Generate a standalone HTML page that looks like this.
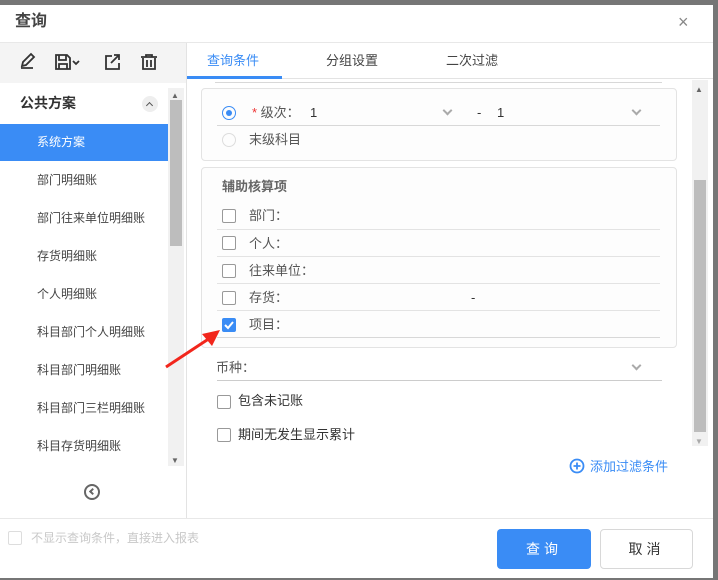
<!DOCTYPE html>
<html><head><meta charset="utf-8"><style>
*{margin:0;padding:0;box-sizing:border-box}
body{width:718px;height:580px;background:#767676;font-family:"Liberation Sans","Noto Sans CJK SC",sans-serif;font-size:13px;color:#444;position:relative;overflow:hidden}
.a{position:absolute}
.dlg{left:0;top:5px;width:713px;height:573px;background:#fff}
.t{position:absolute;white-space:nowrap;line-height:16px}
.ln{position:absolute;height:1px;background:#e3e3e3}
.cb{position:absolute;width:14px;height:14px;border:1px solid #999;border-radius:2px;background:#fff}
.chev{position:absolute;width:7px;height:7px;border-right:2px solid #aaa;border-bottom:2px solid #aaa;transform:rotate(45deg)}
</style></head><body>
<div class="a dlg"></div>
<div class="t" style="left:15px;top:14px;font-size:16px;font-weight:bold;color:#444">查询</div>
<div class="t" style="left:678px;top:14px;font-size:18px;color:#888">×</div>
<div class="ln" style="left:0;top:42px;width:713px;background:#e8e8e8"></div>
<!-- left toolbar -->
<div class="a" style="left:0;top:43px;width:186px;height:40px;background:#f4f4f4"></div>
<svg class="a" style="left:0;top:43px" width="186" height="40" fill="none" stroke="#333" stroke-width="1.8">
<path d="M21 25h12M22 23l1-4 8-8 3 3-8 8z"/>
<path d="M56 12h11l3 3v11H56z M59 12v5h7v-5 M59 26v-5h8v5"/>
<path d="M73 18l3 3 3-3"/>
<path d="M112 13h-6v13h13v-6 M111 20l8-8 M114 12h5v5"/>
<path d="M141 14h16 M146 14v-2h6v2 M143 15v11h12V15 M147 17v7 M151 17v7"/>
</svg>
<div class="ln" style="left:186px;top:43px;width:1px;height:475px"></div>
<!-- list -->
<div class="t" style="left:20px;top:95px;font-weight:bold;color:#333;font-size:14px">公共方案</div>
<div class="a" style="left:142px;top:96px;width:16px;height:16px;border-radius:50%;background:#eee"></div>
<div class="chev" style="left:147px;top:103px;transform:rotate(225deg);width:5px;height:5px;border-color:#555;border-width:1.5px"></div>
<div class="a" style="left:0;top:124px;width:168px;height:37px;background:#3a8cf5"></div>
<div class="t" style="left:37px;top:134px;color:#fff;font-size:12px">系统方案</div>
<div class="t" style="left:37px;top:172px;font-size:12px;color:#444">部门明细账</div>
<div class="t" style="left:37px;top:210px;font-size:12px;color:#444">部门往来单位明细账</div>
<div class="t" style="left:37px;top:248px;font-size:12px;color:#444">存货明细账</div>
<div class="t" style="left:37px;top:286px;font-size:12px;color:#444">个人明细账</div>
<div class="t" style="left:37px;top:324px;font-size:12px;color:#444">科目部门个人明细账</div>
<div class="t" style="left:37px;top:362px;font-size:12px;color:#444">科目部门明细账</div>
<div class="t" style="left:37px;top:400px;font-size:12px;color:#444">科目部门三栏明细账</div>
<div class="t" style="left:37px;top:438px;font-size:12px;color:#444">科目存货明细账</div>
<div class="a" style="left:168px;top:88px;width:16px;height:378px;background:#f1f1f1"></div>
<div class="a" style="left:170px;top:100px;width:12px;height:146px;background:#bdbdbd"></div>
<div class="t" style="left:171px;top:88px;font-size:8px;color:#666">▲</div>
<div class="t" style="left:171px;top:453px;font-size:8px;color:#666">▼</div>
<div class="a" style="left:84px;top:484px;width:16px;height:16px;border:2px solid #666;border-radius:50%"></div>
<div class="chev" style="left:90px;top:489px;width:5px;height:5px;border-color:#666;border-width:2px;transform:rotate(135deg)"></div>
<!-- tabs -->
<div class="t" style="left:207px;top:53px;color:#3a8cf5">查询条件</div>
<div class="t" style="left:326px;top:53px;color:#444">分组设置</div>
<div class="t" style="left:446px;top:53px;color:#444">二次过滤</div>
<div class="ln" style="left:187px;top:78px;width:526px"></div>
<div class="a" style="left:187px;top:76px;width:95px;height:3px;background:#3a8cf5"></div>
<div class="ln" style="left:215px;top:82px;width:447px;background:#d8d8d8"></div>
<div class="a" style="left:692px;top:80px;width:16px;height:366px;background:#f1f1f1"></div>
<div class="a" style="left:694px;top:180px;width:12px;height:252px;background:#bdbdbd"></div>
<div class="t" style="left:695px;top:82px;font-size:8px;color:#666">▲</div>
<div class="t" style="left:695px;top:434px;font-size:8px;color:#aaa">▼</div>
<!-- card1 -->
<div class="a" style="left:201px;top:88px;width:476px;height:73px;border:1px solid #e3e3e3;border-radius:4px;background:#fdfdfd"></div>
<div class="a" style="left:222px;top:106px;width:14px;height:14px;border:1px solid #3a8cf5;border-radius:50%"></div>
<div class="a" style="left:226px;top:110px;width:6px;height:6px;background:#3a8cf5;border-radius:50%"></div>
<div class="t" style="left:252px;top:105px;color:#555"><span style="color:#e33">*</span> 级次：</div>
<div class="t" style="left:310px;top:105px;color:#333">1</div>
<div class="chev" style="left:444px;top:107px"></div>
<div class="t" style="left:477px;top:105px;color:#333">-</div>
<div class="t" style="left:497px;top:105px;color:#333">1</div>
<div class="chev" style="left:633px;top:107px"></div>
<div class="ln" style="left:217px;top:125px;width:443px;background:#d8d8d8"></div>
<div class="a" style="left:222px;top:133px;width:14px;height:14px;border:1px solid #ddd;border-radius:50%"></div>
<div class="t" style="left:249px;top:132px;color:#555">末级科目</div>
<!-- card2 -->
<div class="a" style="left:201px;top:167px;width:476px;height:181px;border:1px solid #e3e3e3;border-radius:4px;background:#fdfdfd"></div>
<div class="t" style="left:222px;top:179px;font-weight:bold;color:#666">辅助核算项</div>
<div class="cb" style="left:222px;top:209px"></div><div class="t" style="left:249px;top:208px;color:#555">部门：</div><div class="ln" style="left:217px;top:229px;width:443px"></div>
<div class="cb" style="left:222px;top:236px"></div><div class="t" style="left:249px;top:236px;color:#555">个人：</div><div class="ln" style="left:217px;top:256px;width:443px"></div>
<div class="cb" style="left:222px;top:264px"></div><div class="t" style="left:249px;top:263px;color:#555">往来单位：</div><div class="ln" style="left:217px;top:283px;width:443px"></div>
<div class="cb" style="left:222px;top:291px"></div><div class="t" style="left:249px;top:290px;color:#555">存货：</div><div class="t" style="left:471px;top:290px;color:#333">-</div><div class="ln" style="left:217px;top:310px;width:443px"></div>
<div class="cb" style="left:222px;top:318px;background:#3a8cf5;border-color:#3a8cf5"></div>
<svg class="a" style="left:222px;top:318px" width="14" height="14"><path d="M3 7l3 3 5-6" stroke="#fff" stroke-width="2" fill="none"/></svg>
<div class="t" style="left:249px;top:317px;color:#555">项目：</div><div class="ln" style="left:217px;top:337px;width:443px;background:#d8d8d8"></div>
<!-- arrow -->
<svg class="a" style="left:160px;top:320px" width="70" height="55"><path d="M6 47L50 18" stroke="#f2261c" stroke-width="3"/><path d="M60 10L42 14L52 26z" fill="#f2261c"/></svg>
<div class="t" style="left:216px;top:360px;color:#555">币种：</div>
<div class="chev" style="left:633px;top:362px"></div>
<div class="ln" style="left:217px;top:380px;width:445px;background:#ccc"></div>
<div class="cb" style="left:217px;top:395px;border-radius:2px"></div><div class="t" style="left:238px;top:393px;color:#333">包含未记账</div>
<div class="cb" style="left:217px;top:428px"></div><div class="t" style="left:238px;top:427px;color:#333">期间无发生显示累计</div>
<svg class="a" style="left:569px;top:458px" width="16" height="16"><circle cx="8" cy="8" r="6.5" stroke="#3a8cf5" stroke-width="1.8" fill="none"/><path d="M8 4.5v7M4.5 8h7" stroke="#3a8cf5" stroke-width="1.8"/></svg>
<div class="t" style="left:590px;top:459px;color:#3a8cf5">添加过滤条件</div>
<!-- footer -->
<div class="ln" style="left:0;top:518px;width:713px;background:#e8e8e8"></div>
<div class="cb" style="left:8px;top:531px;border-color:#ddd"></div>
<div class="t" style="left:31px;top:530px;font-size:12px;color:#c8c8c8">不显示查询条件，直接进入报表</div>
<div class="a" style="left:497px;top:529px;width:94px;height:40px;background:#3a8cf5;border-radius:4px;color:#fff;text-align:center;line-height:40px;font-size:14px;letter-spacing:4px">查询</div>
<div class="a" style="left:600px;top:529px;width:93px;height:40px;background:#fff;border:1px solid #d8d8d8;border-radius:4px;color:#333;text-align:center;line-height:38px;font-size:14px;letter-spacing:4px">取消</div>
</body></html>
